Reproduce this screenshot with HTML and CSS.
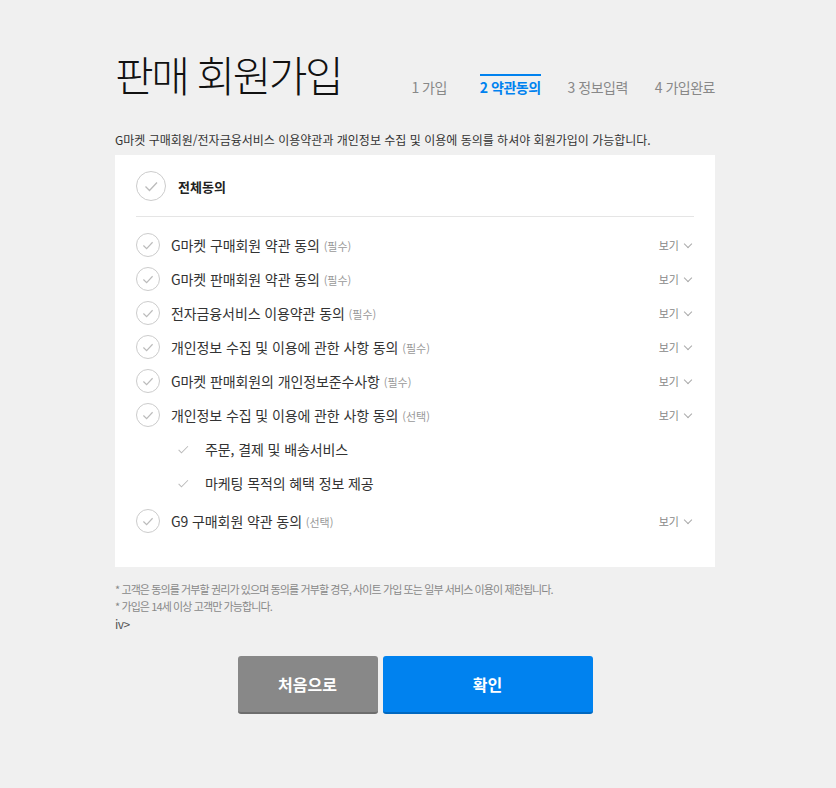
FILE: index.html
```html
<!DOCTYPE html>
<html lang="ko">
<head>
  <meta charset="UTF-8">
  <title>판매 회원가입</title>
  <link rel="stylesheet" href="styles.css">
</head>
<body>
  <div class="wrap">
    <!-- 헤더 -->
    <div class="head">
      <h1 class="title">판매 회원가입</h1>
      <ol class="steps">
        <li>1 가입</li>
        <li class="on">2 약관동의</li>
        <li>3 정보입력</li>
        <li>4 가입완료</li>
      </ol>
    </div>

    <p class="desc">G마켓 구매회원/전자금융서비스 이용약관과 개인정보 수집 및 이용에 동의를 하셔야 회원가입이 가능합니다.</p>

    <!-- 약관 -->
    <div class="box">
      <div class="all">
        <span class="chk big"><svg viewBox="0 0 28 28"><path d="M8.5 14.5l4 4 7.5-8"/></svg></span>
        <strong>전체동의</strong>
      </div>
      <ul class="terms">
        <li><span class="chk"><svg viewBox="0 0 24 24"><path d="M7 12.5l3.5 3.5 6.5-7"/></svg></span><span class="txt">G마켓 구매회원 약관 동의 <em>(필수)</em></span><span class="view">보기</span></li>
        <li><span class="chk"><svg viewBox="0 0 24 24"><path d="M7 12.5l3.5 3.5 6.5-7"/></svg></span><span class="txt">G마켓 판매회원 약관 동의 <em>(필수)</em></span><span class="view">보기</span></li>
        <li><span class="chk"><svg viewBox="0 0 24 24"><path d="M7 12.5l3.5 3.5 6.5-7"/></svg></span><span class="txt">전자금융서비스 이용약관 동의 <em>(필수)</em></span><span class="view">보기</span></li>
        <li><span class="chk"><svg viewBox="0 0 24 24"><path d="M7 12.5l3.5 3.5 6.5-7"/></svg></span><span class="txt">개인정보 수집 및 이용에 관한 사항 동의 <em>(필수)</em></span><span class="view">보기</span></li>
        <li><span class="chk"><svg viewBox="0 0 24 24"><path d="M7 12.5l3.5 3.5 6.5-7"/></svg></span><span class="txt">G마켓 판매회원의 개인정보준수사항 <em>(필수)</em></span><span class="view">보기</span></li>
        <li><span class="chk"><svg viewBox="0 0 24 24"><path d="M7 12.5l3.5 3.5 6.5-7"/></svg></span><span class="txt">개인정보 수집 및 이용에 관한 사항 동의 <em>(선택)</em></span><span class="view">보기</span></li>
        <li class="sub"><span class="tick"><svg viewBox="0 0 16 16"><path d="M2 8.5l3.5 3.5 8-8"/></svg></span><span class="txt">주문, 결제 및 배송서비스</span></li>
        <li class="sub"><span class="tick"><svg viewBox="0 0 16 16"><path d="M2 8.5l3.5 3.5 8-8"/></svg></span><span class="txt">마케팅 목적의 혜택 정보 제공</span></li>
        <li class="g9"><span class="chk"><svg viewBox="0 0 24 24"><path d="M7 12.5l3.5 3.5 6.5-7"/></svg></span><span class="txt">G9 구매회원 약관 동의 <em>(선택)</em></span><span class="view">보기</span></li>
      </ul>
    </div>

    <div class="notice">
      <p>* 고객은 동의를 거부할 권리가 있으며 동의를 거부할 경우, 사이트 가입 또는 일부 서비스 이용이 제한됩니다.</p>
      <p>* 가입은 14세 이상 고객만 가능합니다.</p>
      <p class="stray">iv&gt;</p>
    </div>

    <div class="btns">
      <button class="btn gray">처음으로</button>
      <button class="btn blue">확인</button>
    </div>
  </div>
</body>
</html>
```

FILE: styles.css
```css
body {
  margin: 0;
  background: #f0f0f0;
  font-family: "Noto Sans CJK KR", "Noto Sans", sans-serif;
  color: #333;
}

.wrap {
  width: 600px;
  margin-left: 115px;
  padding-top: 44px;
}

/* 헤더 */
.head {
  display: flex;
  align-items: flex-end;
  justify-content: space-between;
  height: 60px;
}

.title {
  margin: 0;
  font-size: 42px;
  font-weight: 200;
  letter-spacing: -2.5px;
  line-height: 60px;
  color: #111;
}

.steps {
  display: flex;
  list-style: none;
  margin: 0 0 7px;
  padding: 0;
}

.steps li {
  font-size: 14px;
  color: #888;
  letter-spacing: -0.5px;
  margin-left: 27px;
  padding-top: 3px;
  line-height: 20px;
}

.steps li.on {
  color: #0082ef;
  font-weight: bold;
  border-top: 2px solid #0082ef;
  padding-top: 1px;
  margin-left: 33px;
}

.desc {
  margin: 27px 0 7px;
  font-size: 12px;
  color: #333;
  letter-spacing: 0;
}

/* 약관 박스 */
.box {
  background: #fff;
  padding: 15px 21px 29px;
}

.all {
  display: flex;
  align-items: center;
  height: 32px;
  padding-bottom: 14px;
  border-bottom: 1px solid #e5e5e5;
}

.all strong {
  font-size: 13px;
  margin-left: 12px;
  color: #222;
}

.chk {
  display: inline-flex;
  width: 22px;
  height: 22px;
  border: 1px solid #ccc;
  border-radius: 50%;
  flex-shrink: 0;
}

.chk.big {
  width: 28px;
  height: 28px;
}

.chk svg,
.tick svg {
  width: 100%;
  height: 100%;
  fill: none;
  stroke: #bbb;
  stroke-width: 1.3;
}

.terms {
  list-style: none;
  margin: 11px 0 0;
  padding: 0;
}

.terms li {
  display: flex;
  align-items: center;
  height: 34px;
  font-size: 14px;
}

.terms .txt {
  margin-left: 11px;
  flex: 1;
  color: #333;
  letter-spacing: -0.1px;
}

.terms em {
  font-style: normal;
  font-size: 11px;
  color: #999;
  letter-spacing: 0;
}

.view {
  font-size: 11px;
  color: #888;
  margin-right: 3px;
}

.view::after {
  content: '';
  display: inline-block;
  width: 5px;
  height: 5px;
  border-right: 1px solid #aaa;
  border-bottom: 1px solid #aaa;
  transform: rotate(45deg);
  margin: 0 0 3px 6px;
}

.terms li.sub {
  padding-left: 41px;
}

.tick {
  width: 13px;
  height: 13px;
  display: inline-flex;
}

.sub .txt {
  margin-left: 15px;
}

.terms li.g9 {
  margin-top: 4px;
}

/* 안내 */
.notice {
  margin-top: 14px;
  font-size: 11px;
  color: #888;
  letter-spacing: -0.9px;
}

.notice p {
  margin: 0;
  line-height: 17px;
}

.notice .stray {
  color: #555;
  font-size: 12px;
  letter-spacing: -0.5px;
}

/* 버튼 */
.btns {
  display: flex;
  justify-content: center;
  gap: 5px;
  margin-top: 24px;
}

.btn {
  height: 58px;
  border: none;
  border-radius: 3px;
  font-family: inherit;
  font-size: 16px;
  font-weight: bold;
  color: #fff;
  cursor: pointer;
}

.btn.gray {
  width: 140px;
  background: #888;
  border-bottom: 2px solid #6d6d6d;
}

.btn.blue {
  width: 210px;
  background: #0082ef;
  border-bottom: 2px solid #0068c0;
}
```
